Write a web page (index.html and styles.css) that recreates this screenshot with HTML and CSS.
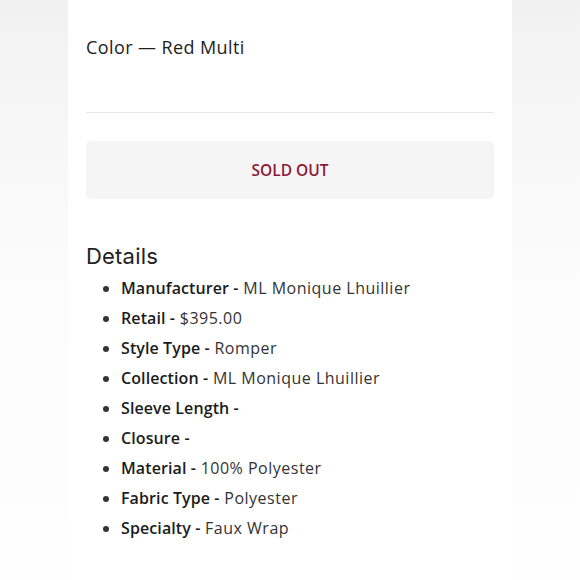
FILE: index.html
```html
<!DOCTYPE html>
<html>
<head>
<meta charset="utf-8">
<link rel="stylesheet" href="styles.css">
</head>
<body>
<div class="page">
  <main class="card">
    <p class="color">Color — Red Multi</p>
    <hr class="divider">
    <div class="soldout">SOLD OUT</div>
    <h2 class="details-title">Details</h2>
    <ul class="details">
      <li><b>Manufacturer -</b> ML Monique Lhuillier</li>
      <li><b>Retail -</b> $395.00</li>
      <li><b>Style Type -</b> Romper</li>
      <li><b>Collection -</b> ML Monique Lhuillier</li>
      <li><b>Sleeve Length -</b></li>
      <li><b>Closure -</b></li>
      <li><b>Material -</b> 100% Polyester</li>
      <li><b>Fabric Type -</b> Polyester</li>
      <li><b>Specialty -</b> Faux Wrap</li>
    </ul>
  </main>
</div>
</body>
</html>
```
FILE: styles.css
```css
html, body {
  margin: 0;
  padding: 0;
  height: 100%;
  overflow: hidden;
}
body {
  background: linear-gradient(180deg, #f1f1f1 0%, #f6f6f6 20%, #fbfbfb 45%, #fdfdfd 70%, #fefefe 100%);
  font-family: "Open Sans", "Liberation Sans", sans-serif;
  color: #222;
}
.page {
  display: flex;
  justify-content: center;
  height: 100%;
}
.card {
  width: 444px;
  box-sizing: border-box;
  background: #fff;
  padding: 35px 18px 0;
}
.color {
  margin: 0;
  font-size: 18px;
  line-height: 24px;
  letter-spacing: 0.4px;
  color: #222;
}
.divider {
  border: 0;
  border-top: 1px solid #e7e7e7;
  margin: 53px 0 0;
}
.soldout {
  margin-top: 28px;
  height: 58px;
  border-radius: 5px;
  background: #f5f5f6;
  display: flex;
  align-items: center;
  justify-content: center;
  color: #8c1a37;
  font-size: 15.5px;
  font-weight: 600;
}
.details-title {
  margin: 42px 0 0;
  font-family: Inter, "Open Sans", sans-serif;
  font-weight: 400;
  font-size: 22px;
  line-height: 30px;
  letter-spacing: 0.2px;
  color: #222;
}
.details {
  margin: 2px 0 0;
  padding-left: 35px;
  font-size: 16px;
  line-height: 30px;
  letter-spacing: 0.5px;
  color: #333;
}
.details b {
  font-weight: 600;
  letter-spacing: 0.1px;
  color: #1c1c1c;
}
```
